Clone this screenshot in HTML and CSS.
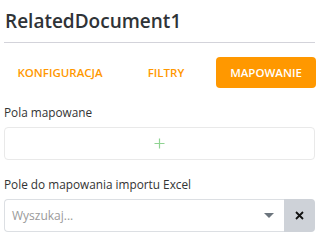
FILE: index.html
```html
<!DOCTYPE html>
<html lang="pl">
  <head>
    <meta charset="UTF-8" />
    <meta name="viewport" content="width=device-width, initial-scale=1.0" />
    <title>RelatedDocument1</title>
    <link rel="stylesheet" href="styles.css">
  </head>
  <body>
    <!-- Header -->
    <div class="panel-header">
      <h2 class="panel-title">RelatedDocument1</h2>
    </div>

    <!-- Tabs -->
    <div class="tabs">
      <a href="#" class="tab">KONFIGURACJA</a>
      <a href="#" class="tab">FILTRY</a>
      <a href="#" class="tab tab-active">MAPOWANIE</a>
    </div>

    <!-- Mapped fields -->
    <div class="field">
      <label class="field-label">Pola mapowane</label>
      <div class="add-box">
        <svg width="11" height="11" viewBox="0 0 11 11">
          <path d="M5.5 0.5v10M0.5 5.5h10" stroke="#8fd392" stroke-width="1.2" fill="none" />
        </svg>
      </div>
    </div>

    <!-- Excel import field -->
    <div class="field">
      <label class="field-label">Pole do mapowania importu Excel</label>
      <div class="select-group">
        <div class="select-box">
          <span class="select-placeholder">Wyszukaj...</span>
          <span class="select-caret"></span>
        </div>
        <button class="select-clear">
          <svg width="9" height="9" viewBox="0 0 9 9">
            <path d="M1 1l7 7M8 1l-7 7" stroke="#111" stroke-width="1.8" fill="none" />
          </svg>
        </button>
      </div>
    </div>
  </body>
</html>
```

FILE: styles.css
```css
/* General Page Styles */
body {
  font-family: "Open Sans", "Noto Sans", sans-serif;
  background-color: #fff;
  color: #333;
  margin: 0;
  padding: 0 3px 0 4px;
}

/* Header */
.panel-header {
  border-bottom: 1px solid #d3d3da;
  padding: 7px 1px 7px;
}

.panel-title {
  margin: 0;
  font-size: 19px;
  font-weight: 600;
  color: #2f3337;
  line-height: 28px;
}

/* Tabs */
.tabs {
  display: grid;
  grid-template-columns: 112px 100px 100px;
  margin-top: 14px;
}

.tab {
  height: 31px;
  display: flex;
  align-items: center;
  justify-content: center;
  text-decoration: none;
  color: #ff9800;
  font-size: 11.5px;
  font-weight: 600;
  border-radius: 4px;
}

.tab-active {
  background-color: #ff9800;
  color: #fff;
}

/* Fields */
.field {
  margin-top: 16px;
}

.field-label {
  display: block;
  font-size: 11.8px;
  line-height: 16px;
  color: #333;
  margin-bottom: 7px;
}

.add-box {
  height: 31px;
  border: 1px solid #e9e9e9;
  border-radius: 4px;
  display: flex;
  align-items: center;
  justify-content: center;
}

/* Select */
.select-group {
  display: flex;
  height: 33px;
}

.select-box {
  flex: 1;
  display: flex;
  align-items: center;
  justify-content: space-between;
  border: 1px solid #dcdfe3;
  border-right: none;
  border-radius: 4px 0 0 4px;
  padding: 0 10px 0 7px;
}

.select-placeholder {
  font-size: 12px;
  color: #9a9a9a;
}

.select-caret {
  width: 0;
  height: 0;
  border-left: 5px solid transparent;
  border-right: 5px solid transparent;
  border-top: 5px solid #6c757d;
}

.select-clear {
  width: 31px;
  border: none;
  background-color: #ced2d8;
  border-radius: 0 4px 4px 0;
  display: flex;
  align-items: center;
  justify-content: center;
  padding: 0;
}
```
